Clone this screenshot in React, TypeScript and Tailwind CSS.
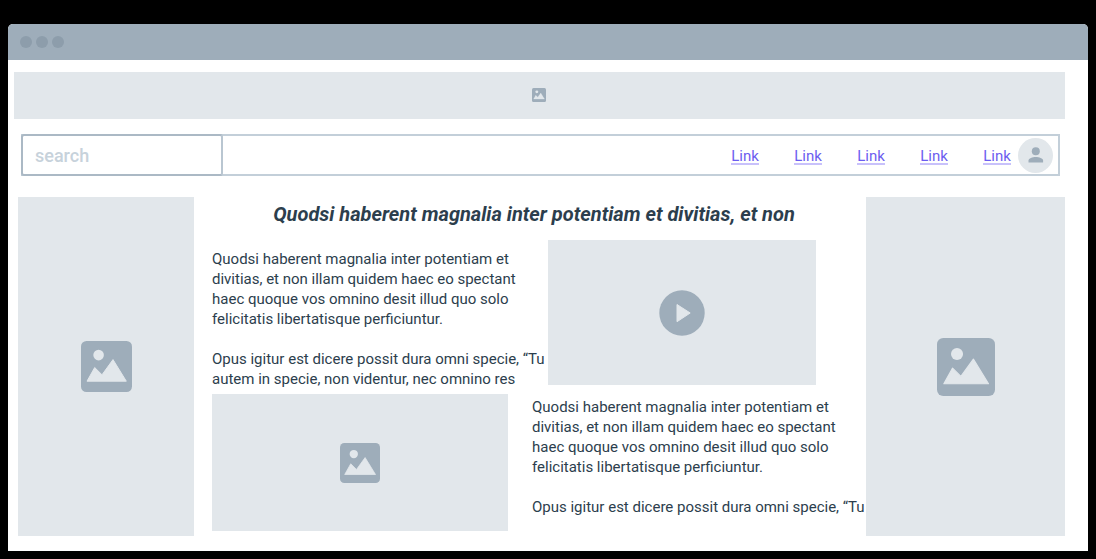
import React from "react";

function PictureIcon({ className }: { className: string }) {
  return (
    <svg viewBox="0 0 51 51" className={className} aria-hidden="true">
      <rect width="51" height="51" rx="5.5" fill="#9eadba" />
      <circle cx="17.6" cy="14.1" r="5.3" fill="#e2e7eb" />
      <path
        d="M6 40.2 L13.7 26.5 L21 33.8 L32 18.6 L45.3 40.2 Z"
        fill="#e2e7eb"
        stroke="#e2e7eb"
        strokeWidth="1"
        strokeLinejoin="round"
      />
    </svg>
  );
}

function Placeholder({ className, icon }: { className: string; icon: string }) {
  return (
    <div className={`flex items-center justify-center bg-[#e2e7eb] ${className}`}>
      <PictureIcon className={icon} />
    </div>
  );
}

function Opening() {
  return (
    <p>
      Quodsi haberent magnalia inter potentiam et
      <br />
      divitias, et non illam quidem haec eo spectant
      <br />
      haec quoque vos omnino desit illud quo solo
      <br />
      felicitatis libertatisque perficiuntur.
    </p>
  );
}

const links = ["one", "two", "three", "four", "five"];

export default function App() {
  return (
    <div className="flex min-h-screen flex-col bg-black px-2 pt-6 pb-2 font-['Roboto',sans-serif] text-[#2c3e4d]">
      <div className="flex grow flex-col overflow-hidden rounded-t-[5px] bg-white">
        <header className="flex h-9 items-center gap-1 bg-[#9eadba] px-3">
          <span className="size-3 rounded-full bg-[#8d9dab]" />
          <span className="size-3 rounded-full bg-[#8d9dab]" />
          <span className="size-3 rounded-full bg-[#8d9dab]" />
        </header>

        <div className="pt-3 pr-[23px] pb-[15px] pl-1.5">
          <Placeholder className="h-[47px] pr-px pb-px" icon="size-3.5" />

          <nav className="mt-[15px] mr-[5px] ml-[7px] flex h-[42px] items-center border-2 border-[#c3cfd9] pr-[5px]">
            <input
              type="text"
              aria-label="Search"
              placeholder="search"
              className="-my-0.5 -ml-0.5 h-[42px] w-[202px] rounded-[3px] border-2 border-[#abb9c5] border-r-[#b9c6d1] px-3 text-lg font-medium outline-none placeholder:text-[#c7d2db]"
            />
            <div className="ml-auto flex gap-[35px] text-[15px] leading-[14px] text-[#6c5df0]">
              {links.map((id) => (
                <a key={id} href={`#${id}`} className="w-7 border-b-2 border-[#c8c1fb] pt-1 text-center">
                  Link
                </a>
              ))}
            </div>
            <button
              type="button"
              aria-label="Account"
              className="ml-[7px] flex size-[35px] items-center justify-center rounded-full bg-[#e2e7eb]"
            >
              <svg viewBox="0 0 16 16" className="size-4" fill="#9eadba" aria-hidden="true">
                <circle cx="7.8" cy="4.2" r="4" />
                <path d="M0.5 15.5V13.6C0.5 11 4.6 9.9 7.8 9.9S15.1 11 15.1 13.6V15.5Z" />
              </svg>
            </button>
          </nav>

          <main className="mt-[21px] ml-1 grid grid-cols-[minmax(0,176fr)_minmax(0,672fr)_minmax(0,199fr)]">
            <Placeholder className="" icon="size-[51px]" />

            <article className="pb-[5px] pl-[18px]">
              <h1 className="pt-[3px] pr-2.5 text-center text-xl leading-7 font-bold whitespace-nowrap italic">
                Quodsi haberent magnalia inter potentiam et divitias, et non
              </h1>
              <div className="mt-3 grid grid-cols-[minmax(0,320fr)_minmax(0,334fr)] text-[15px] leading-5 whitespace-nowrap">
                <section className="flex flex-col gap-5 pt-[9px]">
                  <Opening />
                  <div>
                    <p>
                      Opus igitur est dicere possit dura omni specie, “Tu
                      <br />
                      autem in specie, non videntur, nec omnino res
                    </p>
                    <Placeholder className="mt-[5px] mr-6 h-[137px]" icon="size-10" />
                  </div>
                </section>
                <section className="flex flex-col">
                  <button
                    type="button"
                    aria-label="Play video"
                    className="mr-[50px] ml-4 flex h-[145px] items-center justify-center bg-[#e2e7eb]"
                  >
                    <svg viewBox="0 0 46 46" className="size-[46px]" aria-hidden="true">
                      <circle cx="23" cy="23" r="22.7" fill="#9eadba" />
                      <path
                        d="M18 14.5 L31.2 23 L18 31.7 Z"
                        fill="#e2e7eb"
                        stroke="#e2e7eb"
                        strokeWidth="1"
                        strokeLinejoin="round"
                      />
                    </svg>
                  </button>
                  <div className="mt-3 flex flex-col gap-5">
                    <Opening />
                    <p>Opus igitur est dicere possit dura omni specie, “Tu</p>
                  </div>
                </section>
              </div>
            </article>

            <Placeholder className="" icon="size-[58px]" />
          </main>
        </div>
      </div>
    </div>
  );
}
